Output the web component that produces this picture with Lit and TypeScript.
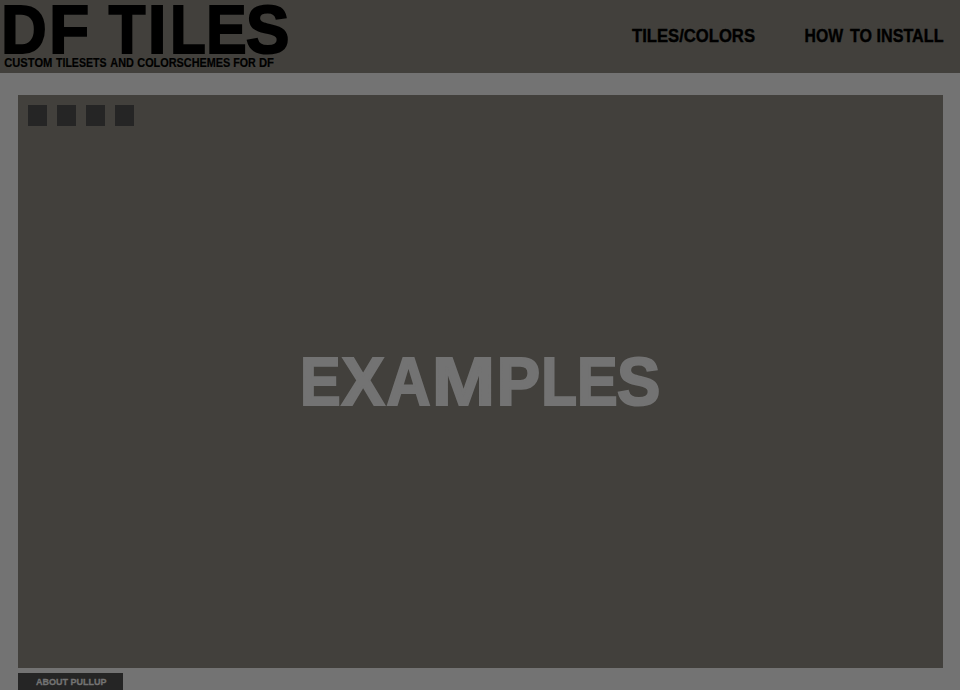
import { LitElement, html, svg, css } from "lit";
import { customElement } from "lit/decorators.js";

// A word: text, left edge, drawn advance width.
type Word = [string, number, number];
// A display letter: character, left and right edge of its ink.
type Letter = [string, number, number];

// Advance, left and right ink bounds of the bold capitals, in 1/2048 em.
const METRICS: Record<string, [number, number, number]> = {
  D: [1479, 137, 1393],
  F: [1251, 137, 1168],
  T: [1251, 42, 1208],
  I: [569, 137, 432],
  L: [1251, 137, 1165],
  E: [1366, 137, 1274],
  S: [1366, 63, 1286],
  X: [1366, 22, 1344],
  A: [1479, 20, 1458],
  M: [1706, 137, 1567],
  P: [1366, 137, 1296],
};
const SIZE = 68;
const STROKE = 2.2;

const line = (words: Word[], y: number) =>
  svg`<text y=${y}>${words.map(
    ([t, x, w], i) =>
      svg`<tspan x=${x} textLength=${w} lengthAdjust="spacingAndGlyphs">${t}</tspan>${i < words.length - 1 ? " " : ""}`
  )}</text>`;

const display = (letters: Letter[], y: number) =>
  svg`<text y=${y}>${letters.map(([ch, l, r]) => {
    const [adv, a, b] = METRICS[ch];
    const k = (r - l - STROKE) / (b - a);
    return svg`<tspan x=${l + STROKE / 2 - a * k} textLength=${adv * k} lengthAdjust="spacingAndGlyphs">${ch}</tspan>`;
  })}</text>`;

@customElement("app-root")
export class AppRoot extends LitElement {
  static styles = css`
    :host {
      display: flex;
      flex-direction: column;
      height: 690px;
      overflow: hidden;
      box-sizing: border-box;
      background: #737373;
      font-family: "Liberation Sans", Arial, sans-serif;
      font-weight: 700;
    }
    svg { display: block; overflow: visible; }
    text { fill: currentColor; stroke: currentColor; }
    header {
      height: 73px;
      flex: none;
      display: flex;
      justify-content: space-between;
      background: #42403c;
      color: #000;
    }
    .title { font-size: ${SIZE}px; stroke-width: ${STROKE}px; }
    .tagline { font-size: 12.5px; stroke-width: 0.2px; }
    .nav { font-size: 18.5px; stroke-width: 0.4px; }
    nav { display: flex; gap: 50px; padding: 25px 16px 0 0; }
    main {
      margin: 22px 17px 0 18px;
      height: 573px;
      flex: none;
      background: #42403c;
      color: #737373;
      display: grid;
      grid-template-rows: 31px 1fr;
    }
    .dots { display: flex; gap: 10px; padding: 10px 0 0 10px; }
    .dot { width: 19px; height: 21px; background: #252525; }
    .hero { justify-self: center; margin-top: 226px; }
    .pullup {
      margin: 5px 0 0 18px;
      width: 105px;
      height: 17px;
      flex: none;
      background: #252525;
      color: #737373;
      font-size: 9.5px;
      stroke-width: 0.3px;
    }
  `;

  render() {
    return html`
      <header>
        <svg width="300" height="73">
          <g class="title">
            ${display([["D", 4.3, 45], ["F", 52.5, 87.5]], 53)}
            ${display([["T", 109, 145.3], ["I", 151.3, 163], ["L", 173, 204.3], ["E", 209.3, 245], ["S", 247, 288]], 53)}
          </g>
          <g class="tagline">${line(
            [["CUSTOM", 4.3, 48], ["TILESETS", 56, 50.5], ["AND", 110.3, 23.5], ["COLORSCHEMES", 137.3, 93], ["FOR", 233.3, 22.5], ["DF", 259, 15]],
            67
          )}</g>
        </svg>
        <nav>
          <svg class="nav" width="123" height="24">${line([["TILES/COLORS", 0, 123]], 17)}</svg>
          <svg class="nav" width="139" height="24">${line([["HOW", -0.5, 38.5], ["TO", 45, 22], ["INSTALL", 71.5, 67]], 17)}</svg>
        </nav>
      </header>
      <main>
        <div class="dots">${[0, 1, 2, 3].map(() => html`<div class="dot"></div>`)}</div>
        <svg class="title hero" width="361" height="80">${display(
          [
            ["E", 3, 39], ["X", 41, 85], ["A", 86, 131], ["M", 136, 191],
            ["P", 200, 239], ["L", 244, 275.5], ["E", 280, 316], ["S", 618 - 300, 659 - 300],
          ],
          53
        )}</svg>
      </main>
      <div class="pullup">
        <svg width="105" height="17">${line([["ABOUT", 18, 32], ["PULLUP", 52.5, 36]], 12)}</svg>
      </div>
    `;
  }
}
